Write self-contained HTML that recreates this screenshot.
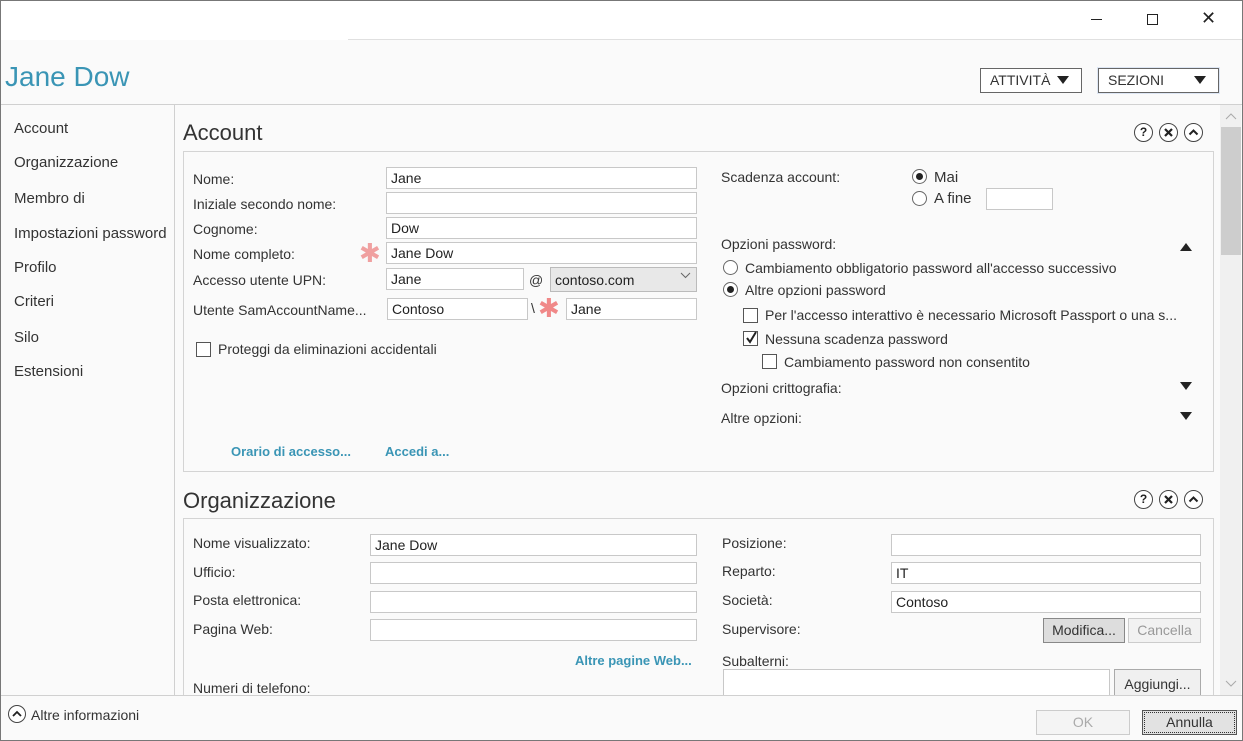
<!DOCTYPE html>
<html><head><meta charset="utf-8"><style>
*{box-sizing:border-box;margin:0;padding:0}
body{width:1243px;height:741px;overflow:hidden;background:#fafafa;font-family:"Liberation Sans",sans-serif;font-size:14px;color:#333;position:relative}
.a{position:absolute;white-space:nowrap}
.in{position:absolute;height:22px;background:#fff;border:1px solid #c8c8c8;padding:2px 4px;font-size:14px;color:#222}
.lnk{color:#3a95b5;font-weight:bold;font-size:13px}
.cb{position:absolute;width:15px;height:15px;border:1px solid #555;background:#fff}
.rb{position:absolute;width:15px;height:15px;border:1px solid #666;border-radius:50%;background:#fff}
.rb.on::after{content:"";position:absolute;left:3px;top:3px;width:7px;height:7px;border-radius:50%;background:#222}
.ic{position:absolute;width:19px;height:19px;border:1px solid #444;border-radius:50%;font-size:12px;font-weight:bold;text-align:center;line-height:17px;color:#222;background:#fff}
.ic svg{position:absolute;left:0;top:0}
.tri-d{position:absolute;width:0;height:0;border-left:6px solid transparent;border-right:6px solid transparent;border-top:8px solid #222}
.tri-u{position:absolute;width:0;height:0;border-left:6px solid transparent;border-right:6px solid transparent;border-bottom:8px solid #222}
.btn{position:absolute;border:1px solid #aaa;background:#ececec;text-align:center;font-size:14px;line-height:22px}
</style></head><body>
<div class="a" style="left:0;top:0;width:1243px;height:741px;border:1px solid #777"></div>
<div class="a" style="top:1px;left:1px;width:1241px;height:39px;background:#fff"></div>
<div class="a" style="left:1091px;top:19px;width:11px;height:1px;background:#222"></div>
<div class="a" style="left:1147px;top:14px;width:11px;height:11px;border:1px solid #222"></div>
<div class="a" style="left:1201px;top:8px;font-size:18px;color:#222">✕</div>
<div class="a" style="left:348px;top:39px;width:894px;height:1px;background:#e0e0e0"></div>
<div class="a" style="left:5px;top:61px;font-size:28px;color:#3a95b5">Jane Dow</div>
<div class="a" style="left:980px;top:68px;width:102px;height:25px;border:1px solid #666;background:#fff;font-size:14px;padding:3px 0 0 9px">ATTIVITÀ</div>
<div class="tri-d" style="left:1057px;top:76px"></div>
<div class="a" style="left:1097px;top:67px;width:123px;height:27px;border:1px solid #dde6f4;background:#fff"></div>
<div class="a" style="left:1098px;top:68px;width:121px;height:25px;border:1px solid #666;background:#fff;font-size:14px;padding:3px 0 0 9px">SEZIONI</div>
<div class="tri-d" style="left:1194px;top:76px"></div>
<div class="a" style="left:1px;top:104px;width:1241px;height:1px;background:#d0d0d0"></div>
<div class="a" style="left:174px;top:105px;width:1px;height:590px;background:#d0d0d0"></div>
<div class="a" style="left:14px;top:120px;font-size:15px">Account</div>
<div class="a" style="left:14px;top:154px;font-size:15px">Organizzazione</div>
<div class="a" style="left:14px;top:190px;font-size:15px">Membro di</div>
<div class="a" style="left:14px;top:225px;font-size:15px">Impostazioni password</div>
<div class="a" style="left:14px;top:259px;font-size:15px">Profilo</div>
<div class="a" style="left:14px;top:293px;font-size:15px">Criteri</div>
<div class="a" style="left:14px;top:329px;font-size:15px">Silo</div>
<div class="a" style="left:14px;top:363px;font-size:15px">Estensioni</div>
<div class="a" style="left:1220px;top:105px;width:21px;height:590px;background:#f0f0f0"></div>
<div class="a" style="left:1221px;top:127px;width:20px;height:128px;background:#cdcdcd"></div>
<svg class="a" style="left:1225px;top:112px" width="12" height="8"><path d="M1 7L6 2L11 7" stroke="#aaa" fill="none"/></svg>
<svg class="a" style="left:1225px;top:680px" width="12" height="8"><path d="M1 1L6 6L11 1" stroke="#aaa" fill="none"/></svg>
<div class="a" style="left:183px;top:120px;font-size:22px;color:#333">Account</div>
<div class="ic" style="left:1134px;top:123px">?</div>
<div class="ic" style="left:1159px;top:123px"><svg width="17" height="17"><path d="M5 5L12 12M12 5L5 12" stroke="#222" stroke-width="2.2"/></svg></div>
<div class="ic" style="left:1184px;top:123px"><svg width="17" height="17"><path d="M4.5 10.5L8.5 6.5L12.5 10.5" stroke="#222" stroke-width="2" fill="none"/></svg></div>
<div class="a" style="left:183px;top:151px;width:1031px;height:321px;border:1px solid #d4d4d4;background:#fafafa"></div>
<div class="a" style="left:193px;top:171px">Nome:</div>
<div class="a" style="left:193px;top:196px">Iniziale secondo nome:</div>
<div class="a" style="left:193px;top:221px">Cognome:</div>
<div class="a" style="left:193px;top:246px">Nome completo:</div>
<div class="a" style="left:193px;top:272px">Accesso utente UPN:</div>
<div class="a" style="left:193px;top:302px">Utente SamAccountName...</div>
<div class="in" style="left:386px;top:167px;width:311px">Jane</div>
<div class="in" style="left:386px;top:192px;width:311px"></div>
<div class="in" style="left:386px;top:217px;width:311px">Dow</div>
<div class="a" style="left:359px;top:238px;font-size:26px;color:#f0a0a0">✱</div>
<div class="in" style="left:386px;top:242px;width:311px">Jane Dow</div>
<div class="in" style="left:386px;top:268px;width:138px">Jane</div>
<div class="a" style="left:529px;top:272px">@</div>
<div class="in" style="left:550px;top:267px;width:147px;height:25px;background:#e8e8e8;border-color:#bbb;padding-top:4px">contoso.com</div>
<svg class="a" style="left:680px;top:272px" width="11" height="7"><path d="M1 1L5.5 5.5L10 1" stroke="#666" fill="none"/></svg>
<div class="in" style="left:387px;top:298px;width:141px">Contoso</div>
<div class="a" style="left:531px;top:300px">\</div>
<div class="a" style="left:538px;top:293px;font-size:26px;color:#f08888">✱</div>
<div class="in" style="left:566px;top:298px;width:131px">Jane</div>
<div class="cb" style="left:196px;top:342px"></div>
<div class="a" style="left:218px;top:341px">Proteggi da eliminazioni accidentali</div>
<div class="a lnk" style="left:231px;top:444px">Orario di accesso...</div>
<div class="a lnk" style="left:385px;top:444px">Accedi a...</div>
<div class="a" style="left:721px;top:169px">Scadenza account:</div>
<div class="rb on" style="left:912px;top:169px"></div>
<div class="a" style="left:934px;top:169px;font-size:15px">Mai</div>
<div class="rb" style="left:912px;top:191px"></div>
<div class="a" style="left:934px;top:190px;font-size:15px">A fine</div>
<div class="in" style="left:986px;top:188px;width:67px"></div>
<div class="a" style="left:721px;top:236px">Opzioni password:</div>
<div class="tri-u" style="left:1180px;top:243px"></div>
<div class="rb" style="left:723px;top:260px"></div>
<div class="a" style="left:745px;top:260px">Cambiamento obbligatorio password all'accesso successivo</div>
<div class="rb on" style="left:723px;top:282px"></div>
<div class="a" style="left:745px;top:282px">Altre opzioni password</div>
<div class="cb" style="left:743px;top:308px"></div>
<div class="a" style="left:765px;top:307px">Per l'accesso interattivo è necessario Microsoft Passport o una s...</div>
<div class="cb" style="left:743px;top:331px"></div>
<svg class="a" style="left:744px;top:330px" width="15" height="15"><path d="M3 8L6 12L12 2" stroke="#222" stroke-width="2" fill="none"/></svg>
<div class="a" style="left:765px;top:331px">Nessuna scadenza password</div>
<div class="cb" style="left:762px;top:354px"></div>
<div class="a" style="left:784px;top:354px">Cambiamento password non consentito</div>
<div class="a" style="left:721px;top:380px">Opzioni crittografia:</div>
<div class="tri-d" style="left:1180px;top:382px"></div>
<div class="a" style="left:721px;top:410px">Altre opzioni:</div>
<div class="tri-d" style="left:1180px;top:412px"></div>
<div class="a" style="left:183px;top:488px;font-size:22px">Organizzazione</div>
<div class="ic" style="left:1134px;top:490px">?</div>
<div class="ic" style="left:1159px;top:490px"><svg width="17" height="17"><path d="M5 5L12 12M12 5L5 12" stroke="#222" stroke-width="2.2"/></svg></div>
<div class="ic" style="left:1184px;top:490px"><svg width="17" height="17"><path d="M4.5 10.5L8.5 6.5L12.5 10.5" stroke="#222" stroke-width="2" fill="none"/></svg></div>
<div class="a" style="left:183px;top:518px;width:1031px;height:190px;border:1px solid #d4d4d4;background:#fafafa"></div>
<div class="a" style="left:193px;top:535px">Nome visualizzato:</div>
<div class="a" style="left:193px;top:564px">Ufficio:</div>
<div class="a" style="left:193px;top:592px">Posta elettronica:</div>
<div class="a" style="left:193px;top:621px">Pagina Web:</div>
<div class="in" style="left:370px;top:534px;width:327px">Jane Dow</div>
<div class="in" style="left:370px;top:562px;width:327px"></div>
<div class="in" style="left:370px;top:591px;width:327px"></div>
<div class="in" style="left:370px;top:619px;width:327px"></div>
<div class="a lnk" style="left:575px;top:653px">Altre pagine Web...</div>
<div class="a" style="left:193px;top:680px">Numeri di telefono:</div>
<div class="a" style="left:722px;top:535px">Posizione:</div>
<div class="a" style="left:722px;top:563px">Reparto:</div>
<div class="a" style="left:722px;top:592px">Società:</div>
<div class="a" style="left:722px;top:621px">Supervisore:</div>
<div class="a" style="left:722px;top:653px">Subalterni:</div>
<div class="in" style="left:891px;top:534px;width:310px"></div>
<div class="in" style="left:891px;top:562px;width:310px">IT</div>
<div class="in" style="left:891px;top:591px;width:310px">Contoso</div>
<div class="btn" style="left:1043px;top:618px;width:82px;height:25px;background:#ddd;border-color:#888">Modifica...</div>
<div class="btn" style="left:1128px;top:618px;width:73px;height:25px;background:#f2f2f2;border-color:#ccc;color:#999">Cancella</div>
<div class="in" style="left:723px;top:669px;width:387px;height:30px"></div>
<div class="btn" style="left:1114px;top:669px;width:87px;height:28px;background:#f0f0f0;line-height:28px">Aggiungi...</div>
<div class="a" style="left:1px;top:695px;width:1241px;height:45px;background:#fafafa;border-top:1px solid #d0d0d0"></div>
<div class="ic" style="left:8px;top:705px;width:18px;height:18px"><svg width="16" height="16"><path d="M4 10L8 6L12 10" stroke="#222" stroke-width="1.8" fill="none"/></svg></div>
<div class="a" style="left:31px;top:707px">Altre informazioni</div>
<div class="btn" style="left:1036px;top:710px;width:94px;height:25px;background:#f4f4f4;border-color:#ccc;color:#aaa">OK</div>
<div class="btn" style="left:1142px;top:710px;width:95px;height:25px;background:#e2e2e2;border:1px solid #555;outline:1px dotted #333;outline-offset:-3px">Annulla</div>
</body></html>
